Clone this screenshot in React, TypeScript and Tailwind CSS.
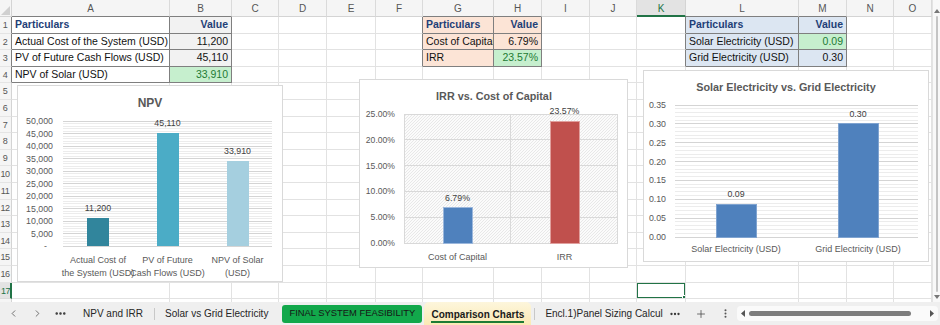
import { ChevronLeft, ChevronRight, Ellipsis, EllipsisVertical, Plus } from 'lucide-react';

type Cell = { text: string; head?: boolean; good?: boolean; right?: boolean; bg?: string };

const LETTERS = ['', 'A', 'B', 'C', 'D', 'E', 'F', 'G', 'H', 'I', 'J', 'K', 'L', 'M', 'N', 'O'];
const ROWS = Array.from({ length: 19 }, (_, i) => i); // 0 = column header, 1..18

const CELLS: Record<string, Cell> = {
    // A1:B4
    '1-1': { text: 'Particulars', head: true },
    '1-2': { text: 'Value', head: true, right: true, bg: 'bg-[#f2f2f2]' },
    '2-1': { text: 'Actual Cost of the System (USD)' },
    '2-2': { text: '11,200', right: true, bg: 'bg-[#f2f2f2]' },
    '3-1': { text: 'PV of Future Cash Flows (USD)' },
    '3-2': { text: '45,110', right: true, bg: 'bg-[#f2f2f2]' },
    '4-1': { text: 'NPV of Solar (USD)' },
    '4-2': { text: '33,910', right: true, good: true },
    // G1:H3
    '1-7': { text: 'Particulars', head: true, bg: 'bg-[#fce4d6]' },
    '1-8': { text: 'Value', head: true, right: true, bg: 'bg-[#fce4d6]' },
    '2-7': { text: 'Cost of Capital', bg: 'bg-[#fce4d6]' },
    '2-8': { text: '6.79%', right: true, bg: 'bg-[#fce4d6]' },
    '3-7': { text: 'IRR', bg: 'bg-[#fce4d6]' },
    '3-8': { text: '23.57%', right: true, good: true },
    // L1:M3
    '1-12': { text: 'Particulars', head: true, bg: 'bg-[#dce6f2]' },
    '1-13': { text: 'Value', head: true, right: true, bg: 'bg-[#dce6f2]' },
    '2-12': { text: 'Solar Electricity (USD)', bg: 'bg-[#dce6f2]' },
    '2-13': { text: '0.09', right: true, good: true },
    '3-12': { text: 'Grid Electricity (USD)', bg: 'bg-[#dce6f2]' },
    '3-13': { text: '0.30', right: true, bg: 'bg-[#dce6f2]' },
};

function inTable(r: number, c: number) {
    return (
        (r >= 1 && r <= 4 && c >= 1 && c <= 2) ||
        (r >= 1 && r <= 3 && c >= 7 && c <= 8) ||
        (r >= 1 && r <= 3 && c >= 12 && c <= 13)
    );
}

function GridCell({ r, c }: { r: number; c: number }) {
    const darkR = inTable(r, c) || inTable(r, c + 1);
    const darkB = inTable(r, c) || inTable(r + 1, c);

    // top-left corner
    if (r === 0 && c === 0) {
        return (
            <div className="bg-[#f5f5f5] border-r border-b border-r-[#d4d4d4] border-b-[#d4d4d4] flex items-end justify-end">
                <svg width="9" height="9" className="mb-[1px] mr-[1px]">
                    <path d="M9 0 L9 9 L0 9 Z" fill="#d0d0d0" />
                </svg>
            </div>
        );
    }

    // column headers
    if (r === 0) {
        if (c === 11) {
            return (
                <div className="bg-[#e3e3e3] border-r border-r-[#d4d4d4] border-b-2 border-b-[#217346] flex items-end justify-center pb-[1px] text-[10px] leading-none text-[#217346]">
                    {LETTERS[c]}
                </div>
            );
        }
        return (
            <div
                className={`bg-[#f5f5f5] border-r border-b border-r-[#dadada] flex items-end justify-center pb-[2px] text-[10px] leading-none text-[#555] ${darkB ? 'border-b-[#7f7f7f]' : 'border-b-[#d4d4d4]'}`}
            >
                {LETTERS[c]}
            </div>
        );
    }

    // row headers
    if (c === 0) {
        if (r === 17) {
            return (
                <div className="bg-[#e3e3e3] border-r-2 border-r-[#217346] border-b border-b-[#dadada] overflow-hidden">
                    <div className="w-[11px] text-center text-[9px] tracking-[-0.4px] leading-[16px] text-[#217346]">17</div>
                </div>
            );
        }
        return (
            <div
                className={`bg-[#f5f5f5] border-r border-b border-b-[#e4e4e4] overflow-hidden ${darkR ? 'border-r-[#7f7f7f]' : 'border-r-[#d4d4d4]'}`}
            >
                <div className="w-[10px] text-center text-[9px] tracking-[-0.4px] leading-[16px] text-[#555]">{r}</div>
            </div>
        );
    }

    const cell = CELLS[`${r}-${c}`];
    const fill = cell?.good ? 'bg-[#c6efce]' : cell?.bg ?? 'bg-white';
    const tone = cell?.head ? 'font-bold text-[#1f3f77]' : cell?.good ? 'text-[#1e7b34]' : 'text-[#111]';

    return (
        <div
            className={`relative border-r border-b flex items-center overflow-hidden whitespace-nowrap px-[3px] text-[10.5px] ${fill} ${tone} ${cell?.right ? 'justify-end' : 'justify-start'} ${darkR ? 'border-r-[#7f7f7f]' : 'border-r-[#e2e2e2]'} ${darkB ? 'border-b-[#7f7f7f]' : 'border-b-[#e2e2e2]'}`}
        >
            {cell?.text}
            {r === 17 && c === 11 && (
                <div className="absolute -left-px -top-px -right-px -bottom-px border-2 border-[#217346]">
                    <div className="absolute -right-[3px] -bottom-[3px] w-[5px] h-[5px] bg-[#217346] border border-white" />
                </div>
            )}
        </div>
    );
}

const FONT = "'Liberation Sans', Arial, sans-serif";

function NpvChart() {
    const base = 160;
    const k = 0.0025;
    const ticks = Array.from({ length: 51 }, (_, i) => i * 1000);
    const bars = [
        { cx: 80, v: 11200, label: '11,200', color: '#31859c', l1: 'Actual Cost of', l2: 'the System (USD)' },
        { cx: 149.5, v: 45110, label: '45,110', color: '#4bacc6', l1: 'PV of Future', l2: 'Cash Flows (USD)' },
        { cx: 219.5, v: 33910, label: '33,910', color: '#a5cfdf', l1: 'NPV of Solar', l2: '(USD)' },
    ];
    return (
        <div className="absolute left-[17px] top-[85px] w-[266px] h-[197px] bg-white border border-[#d9d9d9]">
            <svg width="264" height="195" fontFamily={FONT} className="block">
                <text x="132" y="21" textAnchor="middle" fontSize="12" fontWeight="700" fill="#595959">NPV</text>
                {ticks.map((v) => (
                    <line key={v} x1={45} x2={254} y1={base - v * k} y2={base - v * k}
                        stroke={v % 5000 === 0 ? '#d4d4d4' : '#ececec'} strokeWidth="1" shapeRendering="crispEdges" />
                ))}
                {ticks.filter((v) => v % 5000 === 0).map((v) => (
                    <text key={v} x={v === 0 ? 29 : 35} y={base - v * k + 3} textAnchor="end" fontSize="8.8" fill="#595959">
                        {v === 0 ? '-' : v.toLocaleString('en-US')}
                    </text>
                ))}
                {bars.map((b) => (
                    <g key={b.label}>
                        <rect x={b.cx - 11} y={base - b.v * k} width="22" height={b.v * k} fill={b.color} shapeRendering="crispEdges" />
                        <text x={b.cx} y={base - b.v * k - 7} textAnchor="middle" fontSize="8.8" fill="#404040">{b.label}</text>
                        <text x={b.cx} y="177" textAnchor="middle" fontSize="9" fill="#595959">{b.l1}</text>
                        <text x={b.cx} y="190" textAnchor="middle" fontSize="9" fill="#595959">{b.l2}</text>
                    </g>
                ))}
            </svg>
        </div>
    );
}

function IrrChart() {
    const base = 163;
    const k = 5.16;
    const ticks = [0, 5, 10, 15, 20, 25];
    const bars = [
        { cx: 97.5, v: 6.79, color: '#4f81bd', edge: '#9bb7dc', name: 'Cost of Capital' },
        { cx: 204.5, v: 23.57, color: '#c0504d', edge: '#e0a09e', name: 'IRR' },
    ];
    return (
        <div className="absolute left-[359px] top-[79px] w-[269px] h-[189px] bg-white border border-[#d9d9d9]">
            <svg width="267" height="187" fontFamily={FONT} className="block">
                <defs>
                    <pattern id="hatch" patternUnits="userSpaceOnUse" width="3" height="3">
                        <rect width="3" height="3" fill="#fbfbfb" />
                        <path d="M0 3 L3 0" stroke="#e3e3e3" strokeWidth="0.8" />
                    </pattern>
                </defs>
                <text x="134" y="20" textAnchor="middle" fontSize="10.8" fontWeight="700" fill="#595959">IRR vs. Cost of Capital</text>
                <rect x="44" y={base - 25 * k} width="213" height={25 * k} fill="url(#hatch)" stroke="#d9d9d9" shapeRendering="crispEdges" />
                <line x1="150.5" x2="150.5" y1={base - 25 * k} y2={base} stroke="#d9d9d9" shapeRendering="crispEdges" />
                {ticks.map((v) => (
                    <g key={v}>
                        <line x1={44} x2={257} y1={base - v * k} y2={base - v * k} stroke="#d9d9d9" shapeRendering="crispEdges" />
                        <text x="35" y={base - v * k + 3} textAnchor="end" fontSize="8.6" fill="#595959">{v.toFixed(2)}%</text>
                    </g>
                ))}
                {bars.map((b) => (
                    <g key={b.name}>
                        <rect x={b.cx - 14.5} y={base - b.v * k} width="29" height={b.v * k} fill={b.color} stroke={b.edge} strokeWidth="1" shapeRendering="crispEdges" />
                        <text x={b.cx} y={base - b.v * k - 7} textAnchor="middle" fontSize="8.8" fill="#404040">{b.v.toFixed(2)}%</text>
                        <text x={b.cx} y="180" textAnchor="middle" fontSize="9" fill="#595959">{b.name}</text>
                    </g>
                ))}
            </svg>
        </div>
    );
}

function ElectricityChart() {
    const base = 166;
    const k = 377.1;
    const ticks = Array.from({ length: 36 }, (_, i) => i);
    const bars = [
        { cx: 92, v: 0.087, label: '0.09', name: 'Solar Electricity (USD)' },
        { cx: 214, v: 0.3, label: '0.30', name: 'Grid Electricity (USD)' },
    ];
    return (
        <div className="absolute left-[643px] top-[70px] w-[286px] h-[192px] bg-white border border-[#d9d9d9]">
            <svg width="284" height="190" fontFamily={FONT} className="block">
                <text x="142" y="20" textAnchor="middle" fontSize="10.8" fontWeight="700" fill="#595959">Solar Electricity vs. Grid Electricity</text>
                {ticks.map((i) => (
                    <line key={i} x1={31} x2={274} y1={base - (i / 100) * k} y2={base - (i / 100) * k}
                        stroke={i % 5 === 0 ? '#d4d4d4' : '#ececec'} shapeRendering="crispEdges" />
                ))}
                {ticks.filter((i) => i % 5 === 0).map((i) => (
                    <text key={i} x="22" y={base - (i / 100) * k + 3} textAnchor="end" fontSize="8.8" fill="#595959">{(i / 100).toFixed(2)}</text>
                ))}
                {bars.map((b) => (
                    <g key={b.name}>
                        <rect x={b.cx - 20} y={base - b.v * k} width="40" height={b.v * k} fill="#4f81bd" stroke="#7fa3d0" shapeRendering="crispEdges" />
                        <text x={b.cx} y={base - b.v * k - 7} textAnchor="middle" fontSize="8.8" fill="#404040">{b.label}</text>
                        <text x={b.cx} y="181" textAnchor="middle" fontSize="9" fill="#595959">{b.name}</text>
                    </g>
                ))}
            </svg>
        </div>
    );
}

function SheetTabs() {
    return (
        <div className="h-[23px] flex items-center bg-[#efefef] text-[10px] text-[#262626] whitespace-nowrap">
            <div className="w-[26px] flex justify-center text-[#444]"><ChevronLeft size={11} strokeWidth={1.6} /></div>
            <div className="w-[22px] flex justify-center text-[#444]"><ChevronRight size={11} strokeWidth={1.6} /></div>
            <div className="w-[24px] flex justify-center text-[#333]"><Ellipsis size={13} strokeWidth={2.6} /></div>
            <div className="px-[11px]">NPV and IRR</div>
            <div className="w-px h-[12px] bg-[#c8c8c8]" />
            <div className="pl-[10px] pr-[14px]">Solar vs Grid Electricity</div>
            <div className="w-[140px] h-[18px] rounded-[3px] bg-[#12a84b] flex items-center justify-center text-[9.4px] text-[#161616]">
                FINAL SYSTEM FEASIBILITY
            </div>
            <div className="ml-[2px] w-[107px] self-stretch rounded-t-[5px] bg-gradient-to-b from-[#fdf6dc] to-[#fbe9b4] flex items-center justify-center">
                <span className="font-bold text-[#1a1a1a] border-b-2 border-[#1e7b34] leading-[13px] mt-[3px]">Comparison Charts</span>
            </div>
            <div className="w-px h-[12px] bg-[#c8c8c8] ml-[3px]" />
            <div className="pl-[10px] pr-[4px]">Encl.1)Panel Sizing Calcul</div>
            <div className="w-[16px] flex justify-center text-[#333]"><Ellipsis size={12} strokeWidth={2.6} /></div>
            <div className="w-[36px] flex justify-center text-[#444]"><Plus size={12} strokeWidth={1.5} /></div>
            <div className="w-[14px] flex justify-center text-[#555]"><EllipsisVertical size={11} strokeWidth={2.4} /></div>
            <div className="ml-[4px] w-[201px] h-[15px] rounded-[4px] bg-[#fafafa] flex items-center px-[4px] gap-[4px]">
                <svg width="4" height="7"><path d="M4 0 L0 3.5 L4 7 Z" fill="#555" /></svg>
                <div className="flex-1 h-[5px] rounded-full bg-[#7d7d7d] mr-[15px]" />
                <svg width="4" height="7"><path d="M0 0 L4 3.5 L0 7 Z" fill="#555" /></svg>
            </div>
        </div>
    );
}

export default function App() {
    return (
        <div className="w-[940px] h-[325px] overflow-hidden bg-white flex flex-col font-['Liberation_Sans',Arial,sans-serif]">
            <div className="h-[302px] flex">
                <div className="relative w-[932px] h-[302px] overflow-hidden">
                    <div className="grid grid-cols-[12px_158px_62px_47px_48px_49px_47px_71px_48px_48px_47px_49px_113px_48px_47px_38px] grid-rows-[17px_repeat(18,16.6px)]">
                        {ROWS.map((r) => LETTERS.map((_, c) => <GridCell key={`${r}-${c}`} r={r} c={c} />))}
                    </div>
                    <NpvChart />
                    <IrrChart />
                    <ElectricityChart />
                </div>
                <div className="w-[8px] h-[302px] bg-[#f8f8f8] border-l border-[#e3e3e3] flex flex-col items-center pt-[9px] pb-[3px]">
                    <svg width="6" height="4"><path d="M0 4 L3 0 L6 4 Z" fill="#777" /></svg>
                    <div className="flex-1 w-[2px] my-[3px] rounded-full bg-[#c4c4c4]" />
                    <svg width="6" height="4"><path d="M0 0 L3 4 L6 0 Z" fill="#777" /></svg>
                </div>
            </div>
            <SheetTabs />
        </div>
    );
}
